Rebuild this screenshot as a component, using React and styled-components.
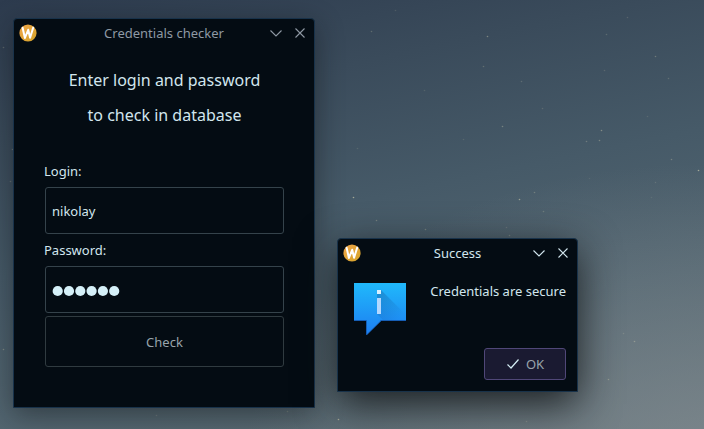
import React from "react";
import styled, { createGlobalStyle } from "styled-components";

const GlobalStyle = createGlobalStyle`
  *, *::before, *::after { box-sizing: border-box; }
  body { margin: 0; overflow: hidden; }
`;

const Desktop = styled.main`
  position: relative;
  width: 704px;
  height: 429px;
  overflow: hidden;
  font-family: "Noto Sans", sans-serif;
  font-size: 13px;
  line-height: 18px;
  color: #d2e6ee;
  background:
    radial-gradient(ellipse 460px 300px at 100% 108%, rgba(138, 146, 151, 0.65), rgba(138, 146, 151, 0) 100%),
    linear-gradient(168deg, #2d3b4e 0%, #3a4b5b 24%, #465a68 48%, #526570 72%, #5f6f76 100%);
`;

const Sky = styled.svg`
  position: absolute;
  inset: 0;
`;

const Window = styled.section`
  position: absolute;
  left: ${(p) => p.$x}px;
  top: ${(p) => p.$y}px;
  width: ${(p) => p.$w}px;
  height: ${(p) => p.$h}px;
  display: flex;
  flex-direction: column;
  background: #040c13;
  border: 1px solid #18324a;
  border-radius: 4px 4px 0 0;
  box-shadow: 0 ${(p) => (p.$active ? 12 : 8)}px ${(p) => (p.$active ? 40 : 28)}px rgba(14, 16, 18, ${(p) => (p.$active ? 0.85 : 0.45)});
`;

const TitleBar = styled.header`
  display: grid;
  grid-template-columns: 56px 1fr 56px;
  align-items: center;
  height: 28px;
  padding: 0 5px;
  color: ${(p) => (p.$active ? "#d2e6ee" : "#8f99a4")};
`;

const Title = styled.h1`
  margin: 0;
  font-size: 13px;
  font-weight: 400;
  text-align: center;
  white-space: nowrap;
`;

const Controls = styled.div`
  display: flex;
  justify-content: flex-end;
  gap: 6px;
`;

const IconButton = styled.button`
  display: flex;
  width: 18px;
  height: 18px;
  padding: 0;
  border: 0;
  background: none;
  color: inherit;
`;

const Form = styled.form`
  display: flex;
  flex-direction: column;
  padding: 16px 30px 0 31px;
`;

const Heading = styled.p`
  margin: 0 0 30px;
  font-size: 16px;
  line-height: 35px;
  text-align: center;
`;

const Label = styled.label`
  height: 18px;
  margin: ${(p) => p.$top}px 0 7px -1px;
`;

const Field = styled.input`
  height: 47px;
  padding: 0 6px;
  font: inherit;
  color: inherit;
  background: transparent;
  border: 1px solid #35434b;
  border-radius: 3px;
  outline: none;
`;

const PasswordField = styled.div`
  display: flex;
  align-items: center;
  height: 47px;
  padding: 3px 6px 0;
  border: 1px solid #35434b;
  border-radius: 3px;
`;

const CheckButton = styled.button`
  height: 51px;
  margin-top: 3px;
  padding: 0;
  font: inherit;
  color: #98a4ab;
  background: transparent;
  border: 1px solid #303b40;
  border-radius: 3px;
`;

const DialogBody = styled.div`
  display: flex;
  justify-content: space-between;
  padding: 16px 11px 0 16px;
`;

const Message = styled.p`
  margin: -1px 0 0;
  white-space: nowrap;
`;

const DialogActions = styled.footer`
  display: flex;
  justify-content: flex-end;
  margin-top: auto;
  padding: 0 11px 11px;
`;

const OkButton = styled.button`
  display: flex;
  align-items: center;
  justify-content: center;
  gap: 6px;
  width: 82px;
  height: 32px;
  padding: 0;
  font: inherit;
  color: #98a4ab;
  background: #1a1a31;
  border: 1px solid #504778;
  border-radius: 3px;
`;

const stars = [
  [371, 31, 0.35], [487, 36, 0.6], [483, 66, 0.35], [606, 34, 0.3], [627, 17, 0.25],
  [655, 56, 0.45], [668, 78, 0.3], [521, 81, 0.3], [424, 90, 0.2], [502, 126, 0.5],
  [601, 130, 0.6], [586, 141, 0.4], [599, 140, 0.5], [671, 159, 0.45], [698, 170, 0.9],
  [353, 197, 0.9], [519, 199, 0.8], [534, 192, 0.4], [543, 211, 0.35], [376, 220, 0.45],
  [425, 229, 0.45], [509, 235, 0.4], [506, 227, 0.25], [634, 341, 0.55], [608, 379, 0.55],
  [623, 333, 0.3], [526, 421, 0.4], [338, 419, 1], [287, 411, 0.35], [156, 415, 0.3],
  [3, 349, 0.5], [3, 47, 0.35], [12, 149, 0.4], [10, 181, 0.35], [655, 182, 0.25],
  [542, 108, 0.25], [604, 70, 0.25], [647, 116, 0.2], [463, 139, 0.2], [357, 148, 0.2],
  [395, 10, 0.2], [589, 178, 0.15], [651, 197, 0.15],
];

function Stars() {
  return (
    <Sky width="704" height="429" aria-hidden="true">
      {stars.map(([x, y, o]) => (
        <circle key={`${x}-${y}`} cx={x + 0.5} cy={y + 0.5} r="0.8" fill="#c6c5aa" opacity={o * 0.8} />
      ))}
    </Sky>
  );
}

function WaylandIcon() {
  return (
    <svg width="18" height="18" viewBox="0 0 18 18" aria-hidden="true">
      <defs>
        <linearGradient id="gold" x1="0" y1="0" x2="1" y2="1">
          <stop offset="0" stopColor="#f0a64a" />
          <stop offset="1" stopColor="#d5a428" />
        </linearGradient>
      </defs>
      <circle cx="9" cy="9" r="8.6" fill="url(#gold)" />
      <path
        d="M3.6 3.8L5.9 14L9.2 5.8L11.1 13.7L14.2 3.6"
        fill="none"
        stroke="#fff"
        strokeWidth="2"
        strokeLinecap="round"
        strokeLinejoin="round"
      />
    </svg>
  );
}

function Glyph({ d }) {
  return (
    <svg width="18" height="18" viewBox="0 0 18 18" fill="none" stroke="currentColor" strokeWidth="1.1">
      <path d={d} />
    </svg>
  );
}

function TitleRow({ title, active }) {
  return (
    <TitleBar $active={active}>
      <WaylandIcon />
      <Title>{title}</Title>
      <Controls>
        <IconButton aria-label="Minimize">
          <Glyph d="M3.5 6.5L9 12L14.5 6.5" />
        </IconButton>
        <IconButton aria-label="Close">
          <Glyph d="M4.5 4.5L13.5 13.5M13.5 4.5L4.5 13.5" />
        </IconButton>
      </Controls>
    </TitleBar>
  );
}

function PasswordDots() {
  return (
    <svg width="68" height="12" viewBox="0 0 68 12" aria-label="Password">
      {[0, 1, 2, 3, 4, 5].map((i) => (
        <circle key={i} cx={5.7 + i * 11.3} cy="6" r="5.1" fill="#d5f0f8" />
      ))}
    </svg>
  );
}

function InfoIcon() {
  return (
    <svg width="52" height="53" viewBox="0 0 52 53" aria-hidden="true">
      <defs>
        <linearGradient id="bubble" x1="0" y1="0" x2="0" y2="1">
          <stop offset="0" stopColor="#20b9fb" />
          <stop offset="1" stopColor="#1d7df1" />
        </linearGradient>
        <linearGradient id="shade" x1="0" y1="0" x2="1" y2="1">
          <stop offset="0" stopColor="#123a75" stopOpacity="0.3" />
          <stop offset="0.85" stopColor="#123a75" stopOpacity="0" />
        </linearGradient>
      </defs>
      <path d="M0 0H52V38H27L12.5 52V38H0Z" fill="url(#bubble)" />
      <path d="M27 7L52 32V38H30L23 31H27V15H23V11H27Z" fill="url(#shade)" />
      <path d="M0 37.5H12.5V51.5M26.5 37.5H52" fill="none" stroke="#165eb5" />
      <path d="M27 37.5L12.5 52" stroke="#1865c0" strokeWidth="0.8" />
      <rect x="23" y="7" width="4" height="4" fill="#d9f0ff" />
      <rect x="23" y="15" width="4" height="16" fill="#b4d8ff" />
    </svg>
  );
}

export default function App() {
  return (
    <Desktop>
      <GlobalStyle />
      <Stars />
      <Window $x={13} $y={18} $w={302} $h={390}>
        <TitleRow title="Credentials checker" />
        <Form>
          <Heading>
            Enter login and password
            <br />
            to check in database
          </Heading>
          <Label htmlFor="login" $top={-1}>Login:</Label>
          <Field id="login" defaultValue="nikolay" />
          <Label $top={7}>Password:</Label>
          <PasswordField>
            <PasswordDots />
          </PasswordField>
          <CheckButton type="button">Check</CheckButton>
        </Form>
      </Window>
      <Window $active $x={337} $y={238} $w={241} $h={154}>
        <TitleRow active title="Success" />
        <DialogBody>
          <InfoIcon />
          <Message>Credentials are secure</Message>
        </DialogBody>
        <DialogActions>
          <OkButton>
            <svg width="14" height="12" viewBox="0 0 14 12" fill="none" stroke="#d5eef5" strokeWidth="1.2">
              <path d="M1.5 6.5L5 10L12.5 1.5" />
            </svg>
            OK
          </OkButton>
        </DialogActions>
      </Window>
    </Desktop>
  );
}
